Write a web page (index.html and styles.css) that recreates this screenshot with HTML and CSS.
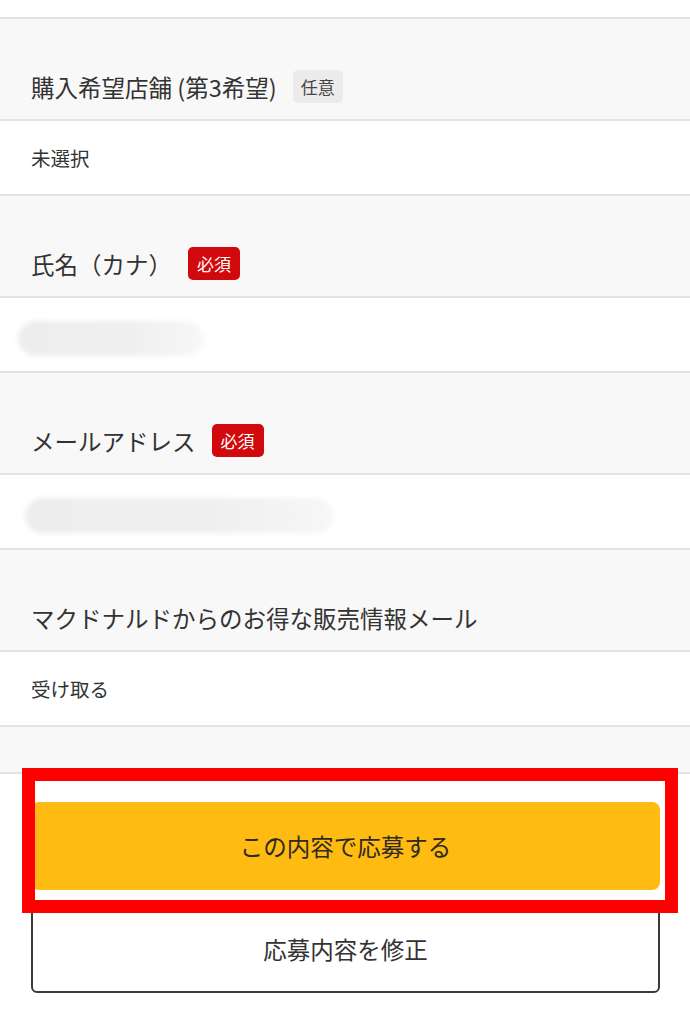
FILE: index.html
```html
<!DOCTYPE html>
<html lang="ja">
<head>
    <meta charset="utf-8">
    <title>応募内容の確認</title>
    <link rel="stylesheet" href="styles.css">
</head>
<body>
    <div class="top-space"></div>

    <div class="field-head">
        <span class="label">購入希望店舗 (第3希望)</span>
        <span class="badge optional">任意</span>
    </div>
    <div class="field-value">未選択</div>

    <div class="field-head">
        <span class="label">氏名（カナ）</span>
        <span class="badge required">必須</span>
    </div>
    <div class="field-value">
        <span class="masked masked-name"></span>
    </div>

    <div class="field-head">
        <span class="label">メールアドレス</span>
        <span class="badge required">必須</span>
    </div>
    <div class="field-value">
        <span class="masked masked-mail"></span>
    </div>

    <div class="field-head">
        <span class="label">マクドナルドからのお得な販売情報メール</span>
    </div>
    <div class="field-value">受け取る</div>

    <div class="spacer"></div>

    <div class="actions">
        <button class="btn btn-submit" type="button">この内容で応募する</button>
        <button class="btn btn-edit" type="button">応募内容を修正</button>
        <!-- highlight frame from the screenshot -->
        <div class="highlight"></div>
    </div>
</body>
</html>
```

FILE: styles.css
```css
body {
    margin: 0;
    padding: 0;
    background-color: #fff;
    font-family: "Noto Sans CJK JP", "Noto Sans", sans-serif;
    color: #333;
}

.top-space {
    height: 17px;
    border-bottom: 2px solid #e3e3e3;
}

.field-head {
    height: 102px;
    box-sizing: border-box;
    background-color: #f8f8f8;
    border-bottom: 2px solid #e3e3e3;
    padding: 0 31px 16px;
    display: flex;
    align-items: flex-end;
}

.label {
    font-size: 23.5px;
    line-height: 32px;
}

.badge {
    display: inline-block;
    margin-left: 16px;
    padding: 0 9px;
    height: 33px;
    line-height: 33px;
    font-size: 17px;
    border-radius: 5px;
}

.optional {
    background-color: #ebebeb;
    color: #444;
    padding: 0 8px;
}

.required {
    background-color: #d2090c;
    color: #fff;
}

.field-value {
    height: 75px;
    box-sizing: border-box;
    border-bottom: 2px solid #e3e3e3;
    padding: 0 31px;
    display: flex;
    align-items: center;
    font-size: 19.5px;
}

.masked {
    display: block;
    height: 35px;
    margin-top: 8px;
    border-radius: 18px;
    background: linear-gradient(90deg, #ededed 0%, #efefef 60%, #f7f7f7 100%);
    filter: blur(2.5px);
}

.masked-name {
    width: 185px;
    margin-left: -13px;
}

.masked-mail {
    width: 308px;
    margin-left: -6px;
}

.spacer {
    height: 45px;
    background-color: #f8f8f8;
    border-bottom: 2px solid #e3e3e3;
}

.actions {
    position: relative;
    padding: 28px 30px 40px 31px;
    display: flex;
    flex-direction: column;
    gap: 15px;
}

.btn {
    height: 88px;
    width: 100%;
    font-family: inherit;
    font-size: 23.5px;
    color: #333;
    cursor: pointer;
}

.btn-submit {
    border: none;
    border-radius: 8px;
    background-color: #ffbb11;
    color: #2e2a20;
}

.btn-edit {
    background-color: #fff;
    border: 2px solid #3a3a3a;
    border-radius: 6px;
}

.highlight {
    position: absolute;
    top: -6px;
    left: 22px;
    width: 656px;
    height: 145px;
    box-sizing: border-box;
    border: 13px solid #ff0000;
}
```
